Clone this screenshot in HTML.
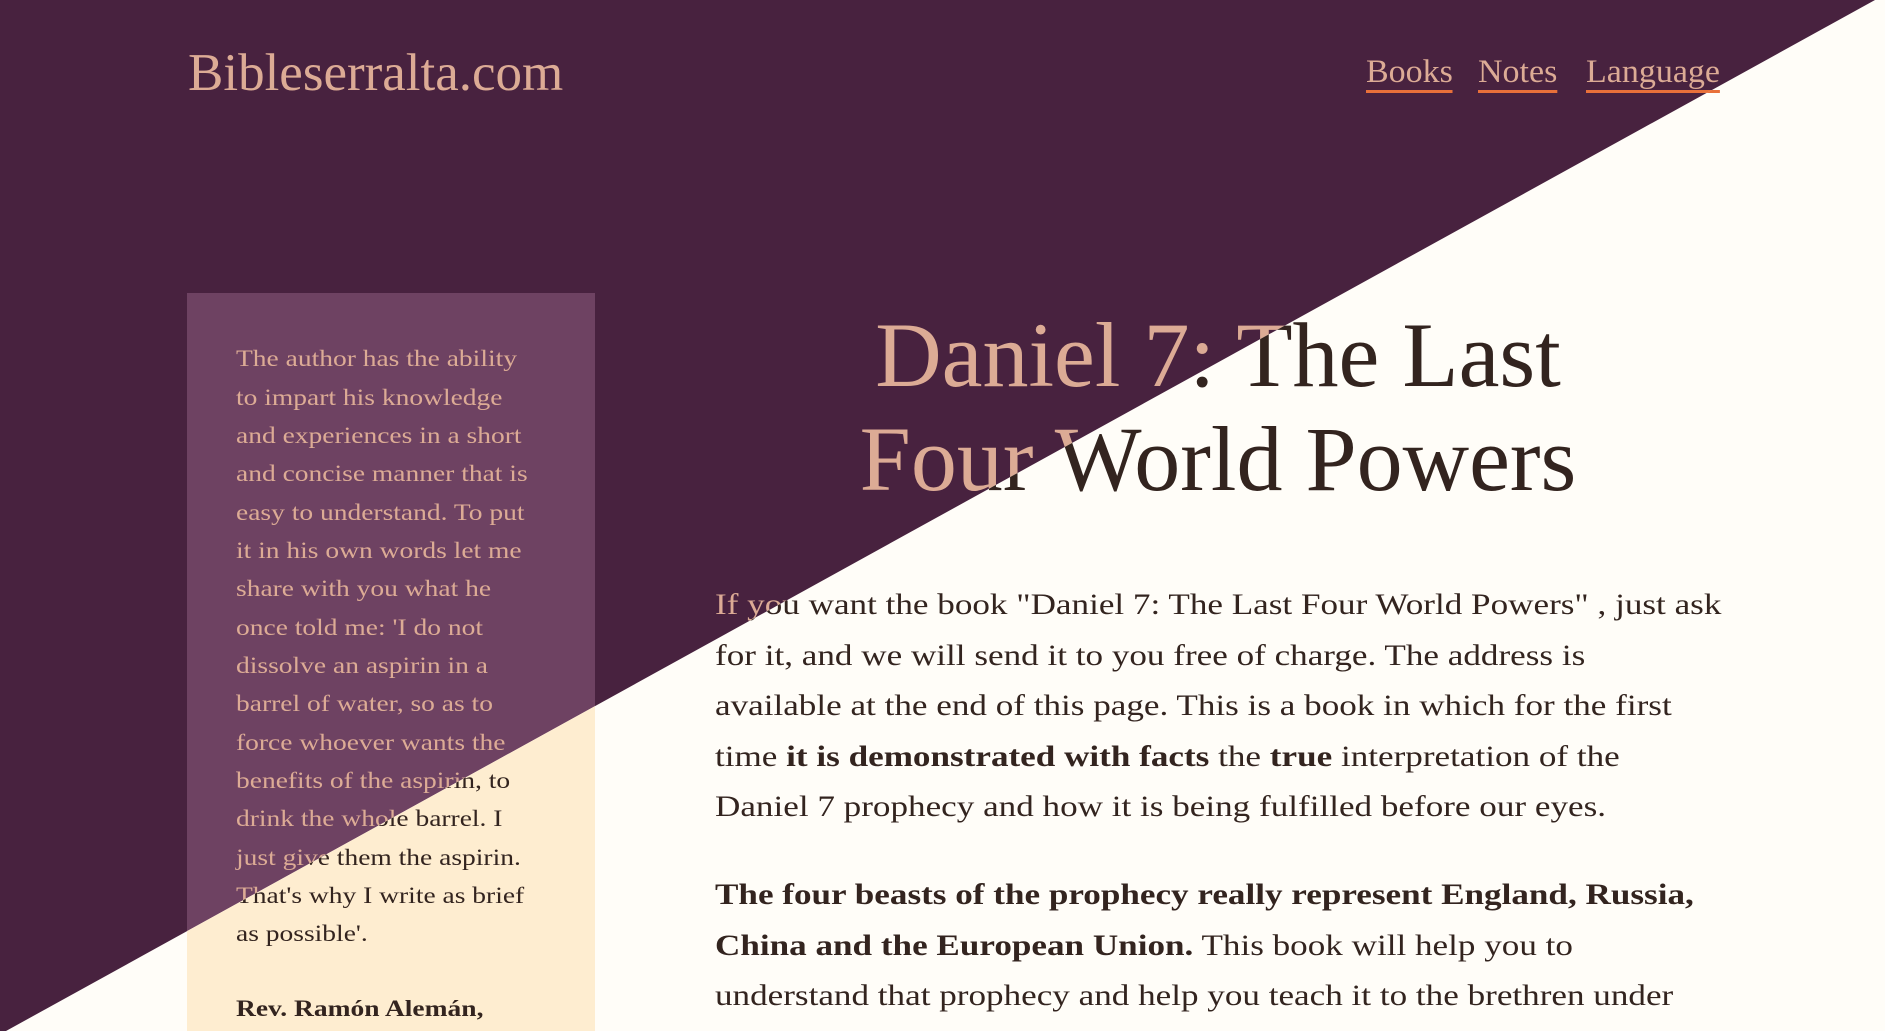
<!DOCTYPE html>
<html><head><meta charset="utf-8">
<style>
html,body{margin:0;padding:0;width:1885px;height:1031px;overflow:hidden}
.layer{position:absolute;left:0;top:0;width:1885px;height:1031px;font-family:"Liberation Serif",serif;overflow:hidden}
.dark{background:#48223f;color:#dcab95}
.light{background:#fffdf8;color:#33241f;clip-path:polygon(1875px 0,1885px 0,1885px 1031px,6px 1031px)}
.l{position:absolute;white-space:nowrap;line-height:1}
.box{position:absolute;left:187px;top:293px;width:408px;height:760px}
.dark .box{background:#6e4262}
.light .box{background:#feedd0}
.logo{left:188px;top:47px;font-size:53px}
.nav a{position:absolute;top:56px;font-size:33px;color:inherit;text-decoration:none;border-bottom:3px solid #e8703a;line-height:1;padding-bottom:1px;transform:scaleX(1.03);transform-origin:left}
.dark .nav a{color:#dcab95}
.light .nav a{color:#33241f}
.bt{font-size:23.5px;left:236px;transform:scaleX(1.17);transform-origin:left}
.t{font-size:92px;left:0;width:2436px;text-align:center;transform:scaleX(1.0)}
.p{font-size:29.5px;left:715px;transform:scaleX(1.19);transform-origin:left}
b{font-weight:bold}
</style></head><body>

<div class="layer dark">
<div class="box"></div>
<div class="l logo">Bibleserralta.com</div>
<div class="nav"><a style="left:1366px">Books</a><a style="left:1478px">Notes</a><a style="left:1586px">Language</a></div>
<div class="l bt" style="top:348px">The author has the ability</div>
<div class="l bt" style="top:387px">to impart his knowledge</div>
<div class="l bt" style="top:425px">and experiences in a short</div>
<div class="l bt" style="top:463px">and concise manner that is</div>
<div class="l bt" style="top:502px">easy to understand. To put</div>
<div class="l bt" style="top:540px">it in his own words let me</div>
<div class="l bt" style="top:578px">share with you what he</div>
<div class="l bt" style="top:617px">once told me: 'I do not</div>
<div class="l bt" style="top:655px">dissolve an aspirin in a</div>
<div class="l bt" style="top:693px">barrel of water, so as to</div>
<div class="l bt" style="top:732px">force whoever wants the</div>
<div class="l bt" style="top:770px">benefits of the aspirin, to</div>
<div class="l bt" style="top:808px">drink the whole barrel. I</div>
<div class="l bt" style="top:847px">just give them the aspirin.</div>
<div class="l bt" style="top:885px">That's why I write as brief</div>
<div class="l bt" style="top:923px">as possible'.</div>
<div class="l bt" style="top:998px"><b>Rev. Ramón Alemán,</b></div>
<div class="l t" style="top:309px">Daniel 7: The Last</div>
<div class="l t" style="top:413px">Four World Powers</div>
<div class="l p" style="top:591px">If you want the book "Daniel 7: The Last Four World Powers" , just ask</div>
<div class="l p" style="top:642px">for it, and we will send it to you free of charge. The address is</div>
<div class="l p" style="top:692px">available at the end of this page. This is a book in which for the first</div>
<div class="l p" style="top:743px">time <b>it is demonstrated with facts</b> the <b>true</b> interpretation of the</div>
<div class="l p" style="top:793px">Daniel 7 prophecy and how it is being fulfilled before our eyes.</div>
<div class="l p" style="top:881px"><b>The four beasts of the prophecy really represent England, Russia,</b></div>
<div class="l p" style="top:932px"><b>China and the European Union.</b> This book will help you to</div>
<div class="l p" style="top:982px">understand that prophecy and help you teach it to the brethren under</div>
</div>

<div class="layer light">
<div class="box"></div>
<div class="l logo">Bibleserralta.com</div>
<div class="nav"><a style="left:1366px">Books</a><a style="left:1478px">Notes</a><a style="left:1586px">Language</a></div>
<div class="l bt" style="top:348px">The author has the ability</div>
<div class="l bt" style="top:387px">to impart his knowledge</div>
<div class="l bt" style="top:425px">and experiences in a short</div>
<div class="l bt" style="top:463px">and concise manner that is</div>
<div class="l bt" style="top:502px">easy to understand. To put</div>
<div class="l bt" style="top:540px">it in his own words let me</div>
<div class="l bt" style="top:578px">share with you what he</div>
<div class="l bt" style="top:617px">once told me: 'I do not</div>
<div class="l bt" style="top:655px">dissolve an aspirin in a</div>
<div class="l bt" style="top:693px">barrel of water, so as to</div>
<div class="l bt" style="top:732px">force whoever wants the</div>
<div class="l bt" style="top:770px">benefits of the aspirin, to</div>
<div class="l bt" style="top:808px">drink the whole barrel. I</div>
<div class="l bt" style="top:847px">just give them the aspirin.</div>
<div class="l bt" style="top:885px">That's why I write as brief</div>
<div class="l bt" style="top:923px">as possible'.</div>
<div class="l bt" style="top:998px"><b>Rev. Ramón Alemán,</b></div>
<div class="l t" style="top:309px">Daniel 7: The Last</div>
<div class="l t" style="top:413px">Four World Powers</div>
<div class="l p" style="top:591px">If you want the book "Daniel 7: The Last Four World Powers" , just ask</div>
<div class="l p" style="top:642px">for it, and we will send it to you free of charge. The address is</div>
<div class="l p" style="top:692px">available at the end of this page. This is a book in which for the first</div>
<div class="l p" style="top:743px">time <b>it is demonstrated with facts</b> the <b>true</b> interpretation of the</div>
<div class="l p" style="top:793px">Daniel 7 prophecy and how it is being fulfilled before our eyes.</div>
<div class="l p" style="top:881px"><b>The four beasts of the prophecy really represent England, Russia,</b></div>
<div class="l p" style="top:932px"><b>China and the European Union.</b> This book will help you to</div>
<div class="l p" style="top:982px">understand that prophecy and help you teach it to the brethren under</div>
</div>

</body></html>
